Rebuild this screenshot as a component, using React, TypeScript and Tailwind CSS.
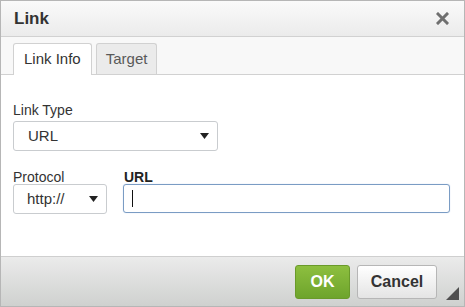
import React from 'react';

const Caret = () => (
  <svg width="9" height="6" viewBox="0 0 9 6" className="shrink-0">
    <path d="M0 0 L9 0 L4.5 6 Z" fill="#222" />
  </svg>
);

export default function App() {
  return (
    <div className="w-[465px] h-[307px] overflow-hidden border border-[#b6b6b6] flex flex-col bg-white text-[#333] font-['Liberation_Sans',Arial,sans-serif]">
      {/* title */}
      <div className="h-[36px] shrink-0 flex items-center justify-between pl-[13px] pr-[15px] border-b border-[#d1d1d1] bg-gradient-to-b from-[#fafafa] to-[#ebebeb]">
        <span className="text-[17px] font-bold text-[#333]">Link</span>
        <svg width="13" height="13" viewBox="0 0 13 13">
          <path d="M2 2 L11 11 M11 2 L2 11" stroke="#6f6f6f" strokeWidth="3" strokeLinecap="square" />
        </svg>
      </div>

      {/* tabs */}
      <div className="h-[38px] shrink-0 flex items-end gap-[4px] pl-[12px] bg-[#f8f8f8] border-b border-[#d1d1d1]">
        <div className="h-[32px] -mb-px px-[10px] flex items-center bg-white border border-b-0 border-[#d1d1d1] rounded-t-[3px] text-[15px] text-[#333]">
          Link Info
        </div>
        <div className="h-[31px] px-[9px] flex items-center bg-[#ebebeb] border border-b-0 border-[#d1d1d1] rounded-t-[3px] text-[15px] text-[#595959]">
          Target
        </div>
      </div>

      {/* content */}
      <div className="flex-1 px-[12px] pt-[26px] flex flex-col text-[14px]">
        <label className="leading-[18px]">Link Type</label>
        <div className="mt-[2px] w-[205px] h-[30px] border border-[#c9cccf] rounded-[3px] flex items-center justify-between pl-[14px] pr-[8px] text-[15px]">
          <span>URL</span>
          <Caret />
        </div>

        <div className="mt-[17px] flex gap-[16px]">
          <div className="flex flex-col">
            <label className="leading-[18px]">Protocol</label>
            <div className="mt-[-2px] w-[94px] h-[30px] border border-[#c9cccf] rounded-[3px] flex items-center justify-between pl-[13px] pr-[8px] text-[15px]">
              <span>http://</span>
              <Caret />
            </div>
          </div>
          <div className="flex flex-col flex-1 pr-[2px]">
            <label className="leading-[18px] font-bold text-[#222] pl-[1px]">URL</label>
            <div className="mt-[-2px] h-[29px] border border-[#7a9cc4] rounded-[3px] flex items-center pl-[8px] shadow-[0_0_1px_#a8c3e3]">
              <span className="w-px h-[17px] bg-[#111]" />
            </div>
          </div>
        </div>
      </div>

      {/* footer */}
      <div className="h-[50px] shrink-0 relative border-t border-[#cfcfcf] bg-gradient-to-b from-[#ebebeb] to-[#cfd1cf] flex items-center justify-end gap-[7px] pr-[27px]">
        <button className="w-[55px] h-[34px] rounded-[3px] border border-[#6a9a2a] bg-gradient-to-b from-[#8dbf3f] to-[#6ea42c] text-white font-bold text-[16px]">
          OK
        </button>
        <button className="w-[80px] h-[34px] rounded-[3px] border border-[#b6b6b6] bg-gradient-to-b from-[#ffffff] to-[#e4e4e4] text-[#333] font-bold text-[16px]">
          Cancel
        </button>
        <svg width="13" height="13" viewBox="0 0 13 13" className="absolute right-[5px] bottom-[6px]">
          <path d="M13 0 L13 13 L0 13 Z" fill="#4f4f4f" />
        </svg>
      </div>
    </div>
  );
}
